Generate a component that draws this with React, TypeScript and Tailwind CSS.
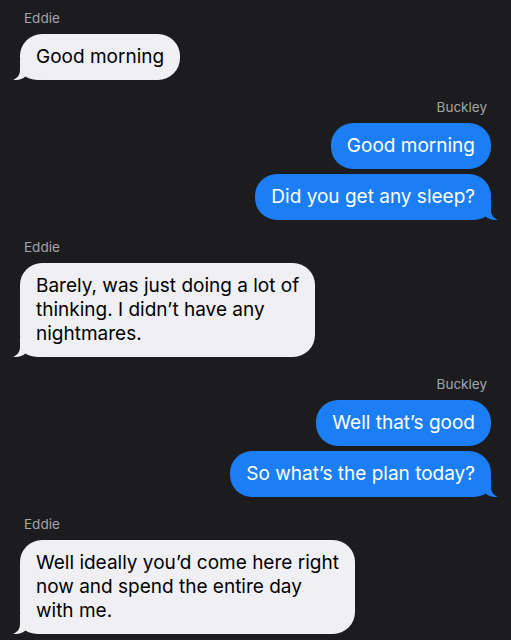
import React from 'react';

type Side = 'left' | 'right';

interface Group {
  sender: string;
  side: Side;
  messages: string[][];
}

// each message is split into the lines shown on screen
const groups: Group[] = [
  { sender: 'Eddie', side: 'left', messages: [['Good morning']] },
  { sender: 'Buckley', side: 'right', messages: [['Good morning'], ['Did you get any sleep?']] },
  {
    sender: 'Eddie',
    side: 'left',
    messages: [['Barely, was just doing a lot of', 'thinking. I didn\u2019t have any', 'nightmares.']],
  },
  { sender: 'Buckley', side: 'right', messages: [['Well that\u2019s good'], ['So what\u2019s the plan today?']] },
  {
    sender: 'Eddie',
    side: 'left',
    messages: [['Well ideally you\u2019d come here right', 'now and spend the entire day', 'with me.']],
  },
];

// little hook at the bottom corner of the last bubble
function Tail({ side }: { side: Side }) {
  const fill = side === 'left' ? '#efeff4' : '#1b7ef5';
  return (
    <svg
      width="28"
      height="20"
      viewBox="0 0 28 20"
      className={`absolute bottom-0 ${side === 'left' ? 'left-[-7px]' : 'right-[-7px] -scale-x-100'}`}
    >
      <path
        d="M7 0 L7 10 C7 15 4.5 18 0 20 C4 20.3 9 19.5 12.5 16.5 C15.5 18.5 20 20 28 20 L28 0 Z"
        fill={fill}
      />
    </svg>
  );
}

function Bubble({ lines, side, tail }: { lines: string[]; side: Side; tail: boolean }) {
  const colors = side === 'left' ? 'bg-[#efeff4] text-black' : 'bg-[#1b7ef5] text-white';
  return (
    <div className={`relative rounded-[22px] px-4 py-[11px] text-[19px] leading-6 whitespace-nowrap ${colors}`}>
      {tail && <Tail side={side} />}
      <div className="relative">
        {lines.map((l, k) => (
          <div key={k}>{l}</div>
        ))}
      </div>
    </div>
  );
}

export default function App() {
  return (
    <div
      className="min-h-[640px] bg-[#1c1c1e] px-5 pt-[10px] flex flex-col gap-[19px]"
      style={{ fontFamily: 'Inter, "Noto Sans", sans-serif' }}
    >
      {groups.map((g, i) => (
        <div key={i} className={`flex flex-col ${g.side === 'left' ? 'items-start' : 'items-end'}`}>
          <div className="px-1 mb-2 text-[13.5px] leading-4 text-[#a5a5aa]">{g.sender}</div>
          <div className={`flex flex-col gap-[5px] ${g.side === 'left' ? 'items-start' : 'items-end'}`}>
            {g.messages.map((m, j) => (
              <Bubble key={j} lines={m} side={g.side} tail={j === g.messages.length - 1} />
            ))}
          </div>
        </div>
      ))}
    </div>
  );
}
